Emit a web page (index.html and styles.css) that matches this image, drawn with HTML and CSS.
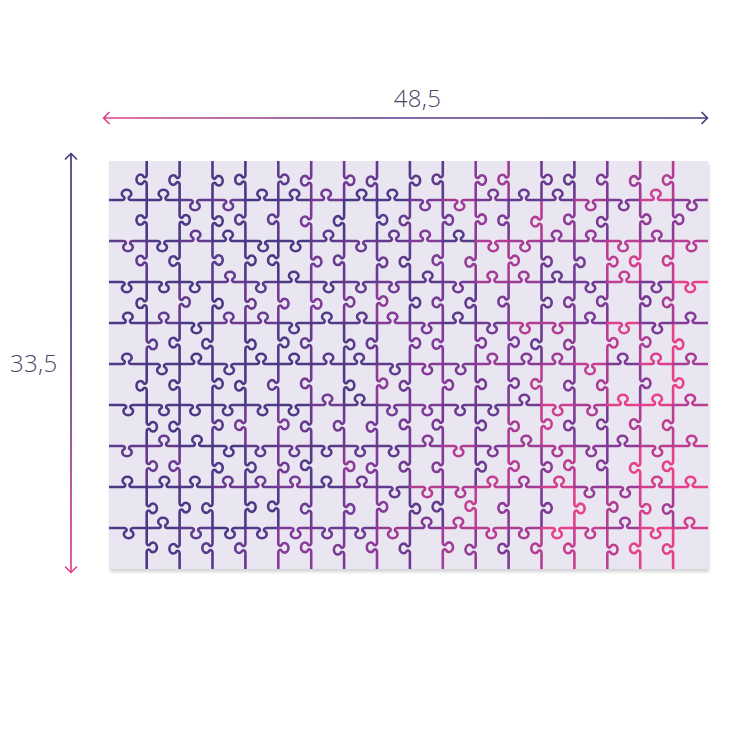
FILE: index.html
```html
<!DOCTYPE html>
<html lang="en">
<head>
<meta charset="utf-8">
<title>Puzzle dimensions</title>
<link rel="stylesheet" href="styles.css">
</head>
<body>
<main class="canvas">
  <section class="figure">
    <div class="width-dim">
      <div class="dim-label dim-label-top">48,5</div>
      <svg class="arrow-h" width="607" height="14" viewBox="0 0 607 14" aria-hidden="true">
        <defs>
          <linearGradient id="gh" x1="0" y1="0" x2="1" y2="0">
            <stop offset="0" stop-color="#e0448c"/>
            <stop offset="0.45" stop-color="#5b3c88"/>
            <stop offset="1" stop-color="#4a3b7e"/>
          </linearGradient>
        </defs>
        <path d="M1.5 7 H605.5 M7 1.5 L1.5 7 L7 12.5 M600 1.5 L605.5 7 L600 12.5" fill="none" stroke="url(#gh)" stroke-width="1.7" stroke-linecap="round" stroke-linejoin="round"/>
      </svg>
    </div>
    <div class="height-dim">
      <div class="dim-label dim-label-side">33,5</div>
      <svg class="arrow-v" width="14" height="422" viewBox="0 0 14 422" aria-hidden="true">
        <defs>
          <linearGradient id="gv" x1="0" y1="0" x2="0" y2="1" gradientUnits="objectBoundingBox">
            <stop offset="0" stop-color="#4a3b7e"/>
            <stop offset="0.5" stop-color="#5c3c88"/>
            <stop offset="1" stop-color="#e3448c"/>
          </linearGradient>
        </defs>
        <rect x="6.15" y="1.5" width="1.7" height="419" fill="url(#gv)"/>
        <path d="M1.5 7 L7 1.5 L12.5 7" fill="none" stroke="#4a3b7e" stroke-width="1.7" stroke-linecap="round" stroke-linejoin="round"/>
        <path d="M1.5 415 L7 420.5 L12.5 415" fill="none" stroke="#e3448c" stroke-width="1.7" stroke-linecap="round" stroke-linejoin="round"/>
      </svg>
    </div>
    <div class="board">
      <svg id="pieces" class="puzzle" width="599" height="408" viewBox="0 0 599 408" aria-label="Puzzle 48,5 x 33,5">
        <rect class="puzzle-bg" x="0" y="0" width="599" height="408"/>
      </svg>
    </div>
  </section>
</main>
<script src="script.js"></script>
</body>
</html>
```
FILE: styles.css
```css
html, body {
  margin: 0;
  padding: 0;
  background: #ffffff;
}
.canvas {
  width: 750px;
  height: 750px;
  background: #ffffff;
  font-family: "Open Sans", "Liberation Sans", sans-serif;
}
.figure {
  display: grid;
  grid-template-columns: 109px 599px;
  grid-template-rows: 161px 408px;
}
.width-dim {
  grid-column: 2;
  grid-row: 1;
  display: flex;
  flex-direction: column;
  padding-top: 82px;
}
.dim-label {
  font-size: 24px;
  line-height: 32px;
  font-weight: 300;
  color: #484766;
  letter-spacing: 0.3px;
}
.dim-label-top {
  text-align: center;
  padding-left: 18px;
}
.arrow-h {
  display: block;
  margin-top: -3px;
  margin-left: -7px;
}
.height-dim {
  grid-column: 1;
  grid-row: 2;
  display: flex;
  align-items: center;
  padding-left: 10px;
}
.dim-label-side {
  margin-bottom: 4px;
}
.arrow-v {
  display: block;
  align-self: flex-start;
  margin-top: -9px;
  margin-left: auto;
  margin-right: 31px;
}
.board {
  grid-column: 2;
  grid-row: 2;
}
.puzzle {
  display: block;
  box-shadow: 1px 3px 3px rgba(60, 60, 70, 0.22);
}
.puzzle-bg {
  fill: #e9e6f1;
}
.cut {
  fill: none;
  stroke-width: 2.6;
  stroke-linecap: round;
  stroke-linejoin: round;
}
```
FILE: script.js
```js
(function () {
  var svg = document.getElementById('pieces');
  var NS = 'http://www.w3.org/2000/svg';
  var W = 599, H = 408;
  var xs = [], ys = [], i, j;
  for (i = 0; i < 17; i++) xs.push(37.7 + i * 32.9);
  for (j = 0; j < 9; j++) ys.push(39 + j * 41);

  var seed = 20240611;
  function rnd() {
    seed |= 0; seed = seed + 0x6D2B79F5 | 0;
    var t = Math.imul(seed ^ seed >>> 15, 1 | seed);
    t = t + Math.imul(t ^ t >>> 7, 61 | t) ^ t;
    return ((t ^ t >>> 14) >>> 0) / 4294967296;
  }

  var stops = [[74, 58, 134], [128, 58, 152], [230, 64, 140]];
  function color(t) {
    t = Math.max(0, Math.min(1, t));
    var a, b, f;
    if (t < 0.5) { a = stops[0]; b = stops[1]; f = t / 0.5; }
    else { a = stops[1]; b = stops[2]; f = (t - 0.5) / 0.5; }
    var c = [0, 1, 2].map(function (k) { return Math.round(a[k] + (b[k] - a[k]) * f); });
    return 'rgb(' + c.join(',') + ')';
  }

  function seg(a, b, d, map) {
    var m = (a + b) / 2 + (rnd() - 0.5) * 3;
    function P(u, v) {
      var p = map(u, v * d);
      return p[0].toFixed(2) + ' ' + p[1].toFixed(2);
    }
    return 'M' + P(a, 0) + ' L' + P(m - 4.2, 0) +
      ' C' + P(m - 2.6, 0) + ' ' + P(m - 1.6, 1.6) + ' ' + P(m - 2.4, 2.9) +
      ' C' + P(m - 3.8, 3.6) + ' ' + P(m - 4.8, 4.6) + ' ' + P(m - 4.8, 6.0) +
      ' C' + P(m - 4.8, 8.5) + ' ' + P(m - 2.6, 10.2) + ' ' + P(m, 10.2) +
      ' C' + P(m + 2.6, 10.2) + ' ' + P(m + 4.8, 8.5) + ' ' + P(m + 4.8, 6.0) +
      ' C' + P(m + 4.8, 4.6) + ' ' + P(m + 3.8, 3.6) + ' ' + P(m + 2.4, 2.9) +
      ' C' + P(m + 1.6, 1.6) + ' ' + P(m + 2.6, 0) + ' ' + P(m + 4.2, 0) +
      ' L' + P(b, 0);
  }

  var g = document.createElementNS(NS, 'g');
  function add(dStr, cx, cy) {
    var p = document.createElementNS(NS, 'path');
    p.setAttribute('d', dStr);
    p.setAttribute('class', 'cut');
    var fx = cx / W, fy = cy / H;
    var t = fx * 0.72 + fx * fy * 0.42 - 0.08 + (rnd() - 0.5) * 0.6;
    p.setAttribute('stroke', color(t));
    g.appendChild(p);
  }

  var yb = [0].concat(ys, [H]);
  var xb = [0].concat(xs, [W]);

  xs.forEach(function (x) {
    for (var k = 0; k < yb.length - 1; k++) {
      var dir = rnd() < 0.5 ? 1 : -1;
      add(seg(yb[k], yb[k + 1], dir, function (u, v) { return [x + v, u]; }), x, (yb[k] + yb[k + 1]) / 2);
    }
  });
  ys.forEach(function (y) {
    for (var k = 0; k < xb.length - 1; k++) {
      var dir = rnd() < 0.5 ? 1 : -1;
      add(seg(xb[k], xb[k + 1], dir, function (u, v) { return [u, y + v]; }), (xb[k] + xb[k + 1]) / 2, y);
    }
  });
  svg.appendChild(g);
})();
```
